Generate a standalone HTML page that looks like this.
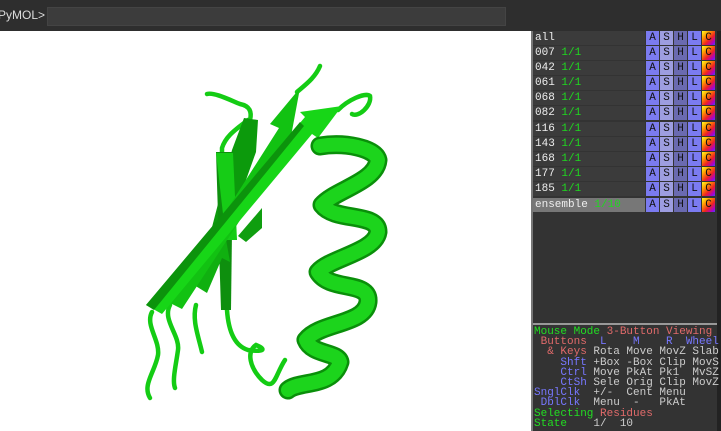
<!DOCTYPE html>
<html><head><meta charset="utf-8"><style>
*{margin:0;padding:0;box-sizing:border-box}
html,body{width:721px;height:431px;overflow:hidden}
body{background:#2d2d2d;position:relative;font-family:"Liberation Mono",monospace}
#top{position:absolute;left:0;top:0;width:721px;height:31px;background:#2e2e2e}
#top span{position:absolute;left:-2px;top:8px;font-family:"Liberation Sans",sans-serif;font-size:12px;color:#ddd}
#inp{position:absolute;left:47px;top:7px;width:459px;height:19px;background:#3c3c3c;border:1px solid #444}
#view{position:absolute;left:0;top:31px;width:531px;height:400px;background:#fff}
#panel{position:absolute;left:531px;top:31px;width:186px;height:400px;background:#333;border-left:2px solid #777}
#rs{position:absolute;left:717px;top:31px;width:4px;height:400px;background:#222}
.row{position:absolute;left:533px;width:112px;height:14px;background:#3b3b3b;color:#eee;font-size:11px;line-height:14px;padding-left:2px;white-space:pre}
.g{color:#1fd81f}
.b{position:absolute;width:13px;height:14px;font-size:11px;line-height:14px;text-align:center;color:#111}
.A{left:646px;background:#7b7bf0}.S{left:660px;background:#9d9de0}.H{left:674px;background:#6a6ab0}.L{left:688px;background:#7b7bf0}
.C{left:702px;background:linear-gradient(135deg,#ff2,#f90 30%,#e22 60%,#a0c 85%,#44f)}
#mm{position:absolute;left:534px;top:327px;font-size:11px;line-height:10.2px;white-space:pre;color:#ccc}
.gr{color:#22dd22}.rd{color:#e06a6a}.bl{color:#7777ff}
#sep{position:absolute;left:533px;top:323px;width:184px;height:2px;background:#999}
</style></head><body>
<div id="top"><span>PyMOL&gt;</span><div id="inp"></div></div>
<div id="view">
<svg width="531" height="400" viewBox="0 31 531 400">
<g fill="none" stroke="#14cc14" stroke-width="4.5" stroke-linecap="round">
<path d="M152,312 C145,325 160,340 158,355 C155,372 142,385 150,398"/>
<path d="M170,305 C162,320 180,335 178,350 C176,365 172,380 175,388"/>
<path d="M196,305 C192,320 198,335 202,352"/>
<path d="M227,310 C228,325 232,345 248,350 C262,352 268,350 256,345 C246,352 250,368 262,380 C275,392 275,375 285,360"/>
<path d="M207,94 C214,92 230,100 240,104 C250,106 252,112 250,120"/>
<path d="M248,120 C238,128 226,135 222,148 L222,160"/>
<path d="M297,92 C305,85 315,78 320,66"/>
<path d="M338,110 C348,100 365,92 370,96 C372,106 358,118 352,114"/>
</g>
<g stroke-linejoin="round">
<polygon points="204,258 216,264 256,152 258,120 244,118 232,150" fill="#0c9a0c"/>
<polygon points="216,152 233,152 231,310 221,310" fill="#0e8f0e"/>
<polygon points="216,153 233,153 237,240 226,240" fill="#16cc16"/>
<polygon points="194,285 207,293 222,258 230,262 224,228 206,250 212,254" fill="#10b010"/>
<polygon points="168,302 182,309 278,162 287,158 300,88 270,124 279,128" fill="#12c212"/>
<polygon points="146,305 162,314 312,134 318,138 342,106 300,112 305,117" fill="#17d617"/>
<polygon points="146,305 154,310 304,126 300,122" fill="#0c930c"/>
<polygon points="246,242 262,228 262,208 238,236" fill="#0f9e0f"/>
</g>
<g fill="none" stroke-linecap="round" stroke-linejoin="round">
<path d="M320,146 C345,142 375,148 378,160 C376,182 335,190 322,205 C335,222 378,212 378,232 C375,252 330,258 318,272 C330,292 370,280 368,302 C365,325 320,322 306,340 C312,355 338,352 340,362 C332,388 300,380 288,390" stroke="#0a8f0a" stroke-width="19"/>
<path d="M320,146 C345,142 375,148 378,160 C376,182 335,190 322,205 C335,222 378,212 378,232 C375,252 330,258 318,272 C330,292 370,280 368,302 C365,325 320,322 306,340 C312,355 338,352 340,362 C332,388 300,380 288,390" stroke="#1cd41c" stroke-width="14"/>
</g>
</svg>
</div>
<div id="panel"></div><div id="rs"></div>
<div class="row" style="top:31px">all</div>
<div class="row" style="top:46px">007 <span class="g">1/1</span></div>
<div class="row" style="top:61px">042 <span class="g">1/1</span></div>
<div class="row" style="top:76px">061 <span class="g">1/1</span></div>
<div class="row" style="top:91px">068 <span class="g">1/1</span></div>
<div class="row" style="top:106px">082 <span class="g">1/1</span></div>
<div class="row" style="top:122px">116 <span class="g">1/1</span></div>
<div class="row" style="top:137px">143 <span class="g">1/1</span></div>
<div class="row" style="top:152px">168 <span class="g">1/1</span></div>
<div class="row" style="top:167px">177 <span class="g">1/1</span></div>
<div class="row" style="top:182px">185 <span class="g">1/1</span></div>
<div class="row" style="top:198px;background:#777">ensemble <span class="g">1/10</span></div>
<div style="position:absolute;top:0;left:0">
<div class="b A" style="top:31px">A</div><div class="b S" style="top:31px">S</div><div class="b H" style="top:31px">H</div><div class="b L" style="top:31px">L</div><div class="b C" style="top:31px">C</div>
<div class="b A" style="top:46px">A</div><div class="b S" style="top:46px">S</div><div class="b H" style="top:46px">H</div><div class="b L" style="top:46px">L</div><div class="b C" style="top:46px">C</div>
<div class="b A" style="top:61px">A</div><div class="b S" style="top:61px">S</div><div class="b H" style="top:61px">H</div><div class="b L" style="top:61px">L</div><div class="b C" style="top:61px">C</div>
<div class="b A" style="top:76px">A</div><div class="b S" style="top:76px">S</div><div class="b H" style="top:76px">H</div><div class="b L" style="top:76px">L</div><div class="b C" style="top:76px">C</div>
<div class="b A" style="top:91px">A</div><div class="b S" style="top:91px">S</div><div class="b H" style="top:91px">H</div><div class="b L" style="top:91px">L</div><div class="b C" style="top:91px">C</div>
<div class="b A" style="top:106px">A</div><div class="b S" style="top:106px">S</div><div class="b H" style="top:106px">H</div><div class="b L" style="top:106px">L</div><div class="b C" style="top:106px">C</div>
<div class="b A" style="top:122px">A</div><div class="b S" style="top:122px">S</div><div class="b H" style="top:122px">H</div><div class="b L" style="top:122px">L</div><div class="b C" style="top:122px">C</div>
<div class="b A" style="top:137px">A</div><div class="b S" style="top:137px">S</div><div class="b H" style="top:137px">H</div><div class="b L" style="top:137px">L</div><div class="b C" style="top:137px">C</div>
<div class="b A" style="top:152px">A</div><div class="b S" style="top:152px">S</div><div class="b H" style="top:152px">H</div><div class="b L" style="top:152px">L</div><div class="b C" style="top:152px">C</div>
<div class="b A" style="top:167px">A</div><div class="b S" style="top:167px">S</div><div class="b H" style="top:167px">H</div><div class="b L" style="top:167px">L</div><div class="b C" style="top:167px">C</div>
<div class="b A" style="top:182px">A</div><div class="b S" style="top:182px">S</div><div class="b H" style="top:182px">H</div><div class="b L" style="top:182px">L</div><div class="b C" style="top:182px">C</div>
<div class="b A" style="top:198px">A</div><div class="b S" style="top:198px">S</div><div class="b H" style="top:198px">H</div><div class="b L" style="top:198px">L</div><div class="b C" style="top:198px">C</div>
</div>
<div id="sep"></div>
<div id="mm"><span class="gr">Mouse Mode </span><span class="rd">3-Button Viewing</span>
<span class="rd"> Buttons  </span><span class="bl">L    M    R  Wheel</span>
<span class="rd">  &amp; Keys</span> Rota Move MovZ Slab
<span class="bl">    Shft</span> +Box -Box Clip MovS
<span class="bl">    Ctrl</span> Move PkAt Pk1  MvSZ
<span class="bl">    CtSh</span> Sele Orig Clip MovZ
<span class="bl">SnglClk</span>  +/-  Cent Menu
<span class="bl"> DblClk</span>  Menu  -   PkAt
<span class="gr">Selecting </span><span class="rd">Residues</span>
<span class="gr">State</span>    1/  10</div>
</body></html>
